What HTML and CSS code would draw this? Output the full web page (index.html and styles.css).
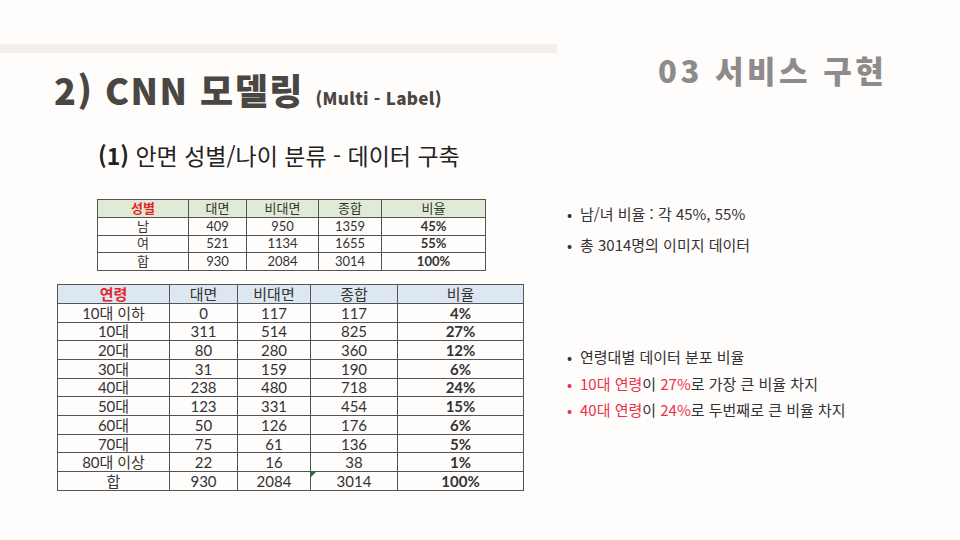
FILE: index.html
```html
<!DOCTYPE html>
<html lang="ko">
<head>
<meta charset="utf-8">
<link rel="stylesheet" href="styles.css">
</head>
<body>
<div class="slide">
  <header class="header">
    <div class="header-left">
      <div class="topbar"></div>
      <h1 class="title">2) CNN 모델링 <span class="title-sub">(Multi - Label)</span></h1>
    </div>
    <div class="section">03 서비스 구현</div>
  </header>
  <main class="content">
    <div class="left">
      <h2 class="subtitle"><b>(1)</b> 안면 성별/나이 분류 - 데이터 구축</h2>
      <table class="tbl tbl-gender">
        <colgroup><col class="g1"><col class="g2"><col class="g3"><col class="g4"><col class="g5"></colgroup>
        <tr class="head"><th class="red">성별</th><th>대면</th><th>비대면</th><th>종합</th><th>비율</th></tr>
        <tr><td>남</td><td>409</td><td>950</td><td>1359</td><td class="b">45%</td></tr>
        <tr><td>여</td><td>521</td><td>1134</td><td>1655</td><td class="b">55%</td></tr>
        <tr><td>합</td><td>930</td><td>2084</td><td>3014</td><td class="b">100%</td></tr>
      </table>
      <table class="tbl tbl-age">
        <colgroup><col class="a1"><col class="a2"><col class="a3"><col class="a4"><col class="a5"></colgroup>
        <tr class="head"><th class="red">연령</th><th>대면</th><th>비대면</th><th>종합</th><th>비율</th></tr>
        <tr><td>10대 이하</td><td>0</td><td>117</td><td>117</td><td class="b">4%</td></tr>
        <tr><td>10대</td><td>311</td><td>514</td><td>825</td><td class="b">27%</td></tr>
        <tr><td>20대</td><td>80</td><td>280</td><td>360</td><td class="b">12%</td></tr>
        <tr><td>30대</td><td>31</td><td>159</td><td>190</td><td class="b">6%</td></tr>
        <tr><td>40대</td><td>238</td><td>480</td><td>718</td><td class="b">24%</td></tr>
        <tr><td>50대</td><td>123</td><td>331</td><td>454</td><td class="b">15%</td></tr>
        <tr><td>60대</td><td>50</td><td>126</td><td>176</td><td class="b">6%</td></tr>
        <tr><td>70대</td><td>75</td><td>61</td><td>136</td><td class="b">5%</td></tr>
        <tr><td>80대 이상</td><td>22</td><td>16</td><td>38</td><td class="b">1%</td></tr>
        <tr><td>합</td><td>930</td><td>2084</td><td class="mark">3014</td><td class="b">100%</td></tr>
      </table>
    </div>
    <div class="right">
      <ul class="bullets group1">
        <li>남/녀 비율 : 각 45%, 55%</li>
        <li>총 3014명의 이미지 데이터</li>
      </ul>
      <ul class="bullets group2">
        <li>연령대별 데이터 분포 비율</li>
        <li class="red-dot"><span class="red">10대 연령</span>이 <span class="red">27%</span>로 가장 큰 비율 차지</li>
        <li class="red-dot"><span class="red">40대 연령</span>이 <span class="red">24%</span>로 두번째로 큰 비율 차지</li>
      </ul>
    </div>
  </main>
</div>
</body>
</html>
```
FILE: styles.css
```css
* { box-sizing: border-box; }
html, body { margin: 0; padding: 0; }
body {
  background: #fffcfc;
  font-family: "Noto Sans CJK KR", "Noto Sans", sans-serif;
  color: #333;
}
.slide {
  width: 960px;
  height: 540px;
  overflow: hidden;
}
.header {
  display: flex;
  align-items: flex-start;
}
.header-left {
  width: 557px;
  padding-top: 44px;
}
.topbar {
  height: 9px;
  background: #f5efe9;
}
.title {
  margin: 14px 0 0 54px;
  font-size: 36px;
  font-weight: 900;
  line-height: 44px;
  color: #4a4642;
  letter-spacing: 1.5px;
  white-space: nowrap;
}
.title-sub {
  font-size: 17px;
  font-weight: 900;
  letter-spacing: 0.3px;
}
.section {
  margin: 50px 0 0 101px;
  font-size: 31px;
  font-weight: 900;
  line-height: 40px;
  color: #8e8b8b;
  letter-spacing: 3.5px;
  white-space: nowrap;
}
.content {
  display: flex;
  margin-top: 18px;
}
.left {
  width: 566px;
}
.subtitle {
  margin: 0 0 0 98px;
  font-size: 23px;
  font-weight: 400;
  line-height: 34px;
  color: #222;
}
.subtitle b { font-weight: 700; }
.tbl {
  border-collapse: collapse;
  table-layout: fixed;
  color: #333;
  font-family: "Lato", "Noto Sans CJK KR", sans-serif;
}
.tbl th, .tbl td {
  border: 1px solid #555;
  padding: 0;
  text-align: center;
  font-weight: 400;
  white-space: nowrap;
}
.tbl .b { font-weight: 700; }
.tbl .red { color: #e8232e; font-weight: 700; }
.tbl-gender {
  margin: 27px 0 0 97px;
  width: 388px;
  font-size: 13px;
}
.tbl-gender tr { height: 17.8px; }
.tbl-gender th, .tbl-gender td { line-height: 15px; }
.tbl-gender .head th { background: #e0ead4; }
.g1 { width: 91px; } .g2 { width: 58px; } .g3 { width: 72px; } .g4 { width: 63px; } .g5 { width: 104px; }
.tbl-age {
  margin: 13px 0 0 57px;
  width: 466px;
  font-size: 15px;
}
.tbl-age tr { height: 18.7px; }
.tbl-age th, .tbl-age td { line-height: 16px; }
.tbl-age .head th { background: #dde7f2; }
.a1 { width: 112px; } .a2 { width: 68px; } .a3 { width: 73px; } .a4 { width: 87px; } .a5 { width: 126px; }
.mark { position: relative; }
.mark::before {
  content: "";
  position: absolute;
  left: 0;
  top: 0;
  border-top: 5px solid #1a7a2a;
  border-right: 5px solid transparent;
}
.right {
  flex: 1;
}
.bullets {
  list-style: none;
  margin: 0;
  padding: 0;
  font-size: 15px;
  line-height: 26.5px;
  color: #333;
}
.bullets li {
  position: relative;
  padding-left: 14px;
}
.bullets li::before {
  content: "•";
  position: absolute;
  left: 1px;
  top: 0;
  color: #333;
}
.bullets li.red-dot::before { color: #e8334a; }
.bullets .red { color: #e8334a; }
.group1 { margin-top: 63px; }
.group1 li + li { margin-top: 4px; }
.group2 { margin-top: 86px; }
```
